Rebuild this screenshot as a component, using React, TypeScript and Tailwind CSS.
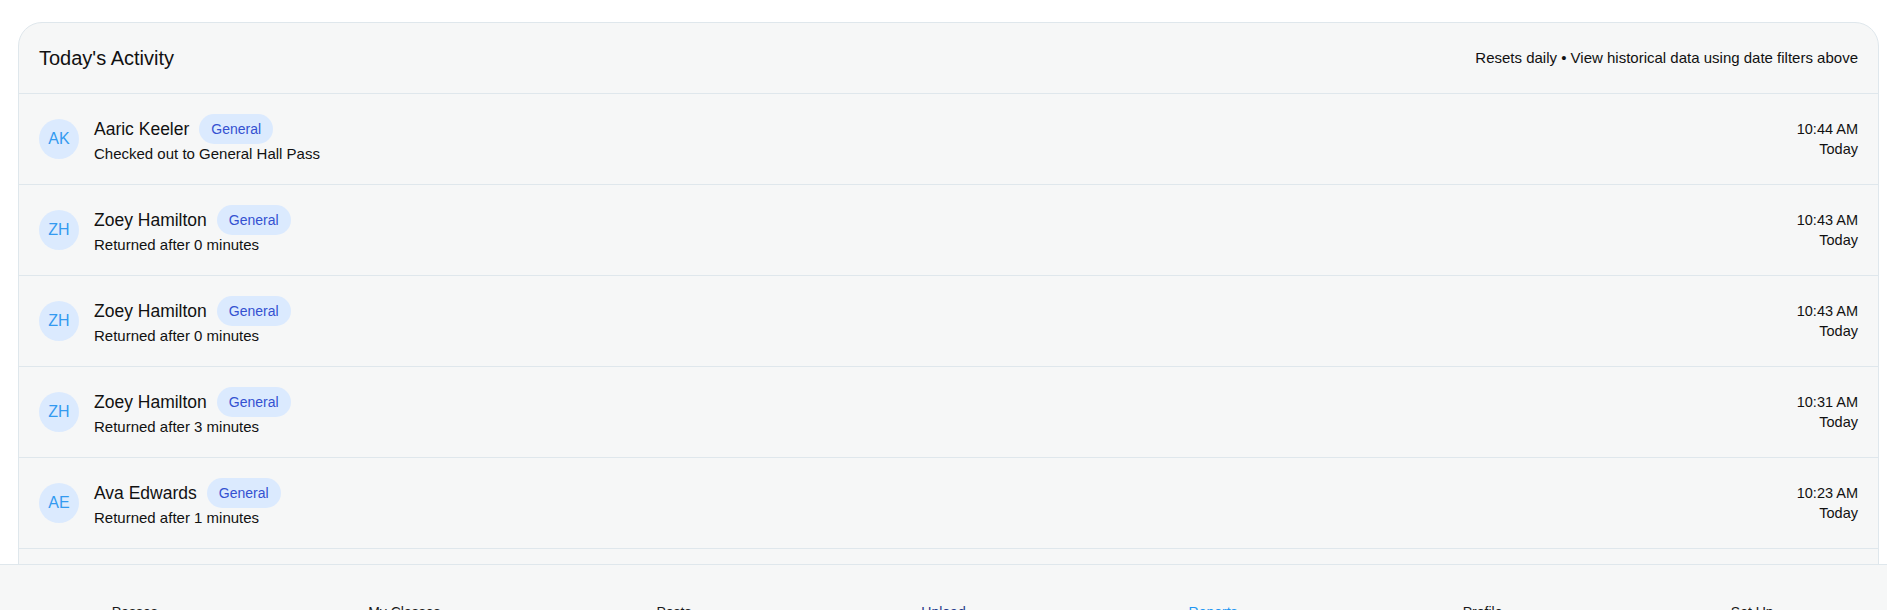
import React from "react";

type Item = {
  initials: string;
  name: string;
  detail: string;
  time: string;
};

const items: Item[] = [
  { initials: "AK", name: "Aaric Keeler", detail: "Checked out to General Hall Pass", time: "10:44 AM" },
  { initials: "ZH", name: "Zoey Hamilton", detail: "Returned after 0 minutes", time: "10:43 AM" },
  { initials: "ZH", name: "Zoey Hamilton", detail: "Returned after 0 minutes", time: "10:43 AM" },
  { initials: "ZH", name: "Zoey Hamilton", detail: "Returned after 3 minutes", time: "10:31 AM" },
  { initials: "AE", name: "Ava Edwards", detail: "Returned after 1 minutes", time: "10:23 AM" },
  { initials: "AE", name: "Ava Edwards", detail: "Checked out to General Hall Pass", time: "10:22 AM" },
];

const navItems = [
  { label: "Passes", cls: "text-[#1a1a1a]" },
  { label: "My Classes", cls: "text-[#1a1a1a]" },
  { label: "Posts", cls: "text-[#1a1a1a]" },
  { label: "Upload", cls: "text-[#1e3a8a]" },
  { label: "Reports", cls: "text-[#2196f3]" },
  { label: "Profile", cls: "text-[#1a1a1a]" },
  { label: "Set Up", cls: "text-[#1a1a1a]" },
];

function Row({ item }: { item: Item }) {
  return (
    <div className="flex items-center border-t border-[#dfe7ec] px-5 py-5">
      <div className="flex h-10 w-10 shrink-0 items-center justify-center rounded-full bg-[#dbeafe] text-[16px] text-[#339af0]">
        {item.initials}
      </div>
      <div className="ml-[15px] flex flex-1 flex-col">
        <div className="flex h-[30px] items-center">
          <span className="text-[17.5px] leading-6 text-[#111111]">{item.name}</span>
          <span className="ml-[10px] rounded-full bg-[#dbeafe] px-3 py-[5px] text-[14px] leading-5 text-[#3451d1]">
            General
          </span>
        </div>
        <div className="text-[15px] leading-5 text-[#111111]">{item.detail}</div>
      </div>
      <div className="flex flex-col items-end text-[14.5px] leading-5 text-[#111111]">
        <span>{item.time}</span>
        <span>Today</span>
      </div>
    </div>
  );
}

export default function App() {
  return (
    <div
      className="min-h-[610px] bg-white pt-[22px] pl-[18px] pr-[8px]"
      style={{ fontFamily: '"Liberation Sans", Arial, sans-serif' }}
    >
      <div className="overflow-hidden rounded-3xl border border-[#dfe7ec] bg-[#f6f7f7]">
        <div className="flex items-center justify-between px-5 py-[21px]">
          <h2 className="text-[20px] leading-7 text-[#111111]">Today's Activity</h2>
          <span className="text-[15px] leading-5 text-[#111111]">
            Resets daily • View historical data using date filters above
          </span>
        </div>
        {items.map((it, i) => (
          <Row key={i} item={it} />
        ))}
      </div>
      <nav className="fixed left-0 right-0 top-[564px] grid h-[90px] grid-cols-7 border-t border-[#dfe7ec] bg-[#f6f7f7] pt-[37px]">
        {navItems.map((n) => (
          <div key={n.label} className={`text-center text-[14px] leading-5 ${n.cls}`}>
            {n.label}
          </div>
        ))}
      </nav>
    </div>
  );
}
